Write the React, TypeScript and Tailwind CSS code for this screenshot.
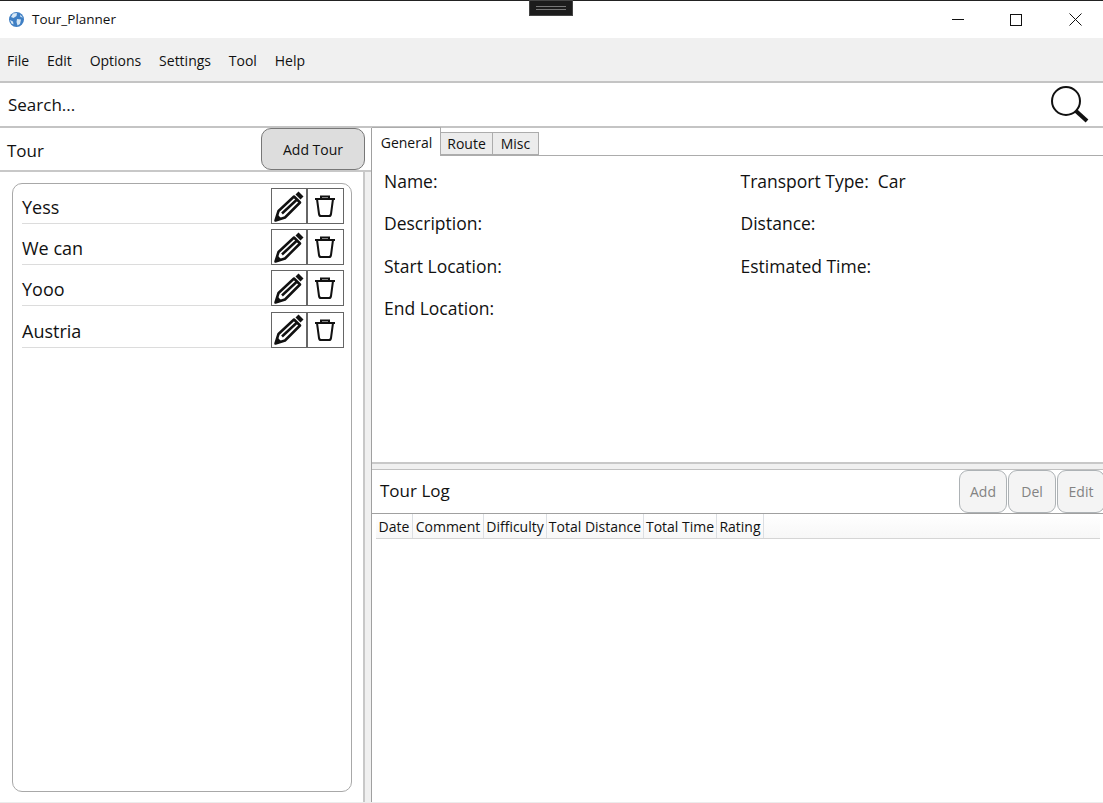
import React from "react";

const menuItems = ["File", "Edit", "Options", "Settings", "Tool", "Help"];
const tours = ["Yess", "We can", "Yooo", "Austria"];
const columns = [
  { label: "Date", width: "w-[37px]" },
  { label: "Comment", width: "w-[71px]" },
  { label: "Difficulty", width: "w-[63px]" },
  { label: "Total Distance", width: "w-[97px]" },
  { label: "Total Time", width: "w-[73px]" },
  { label: "Rating", width: "w-[47px]" },
];

function GlobeIcon() {
  return (
    <svg width="17" height="17" viewBox="0 0 17 17">
      <circle cx="8.5" cy="8.5" r="7.5" fill="#3f7fc4" />
      <path d="M5 2.5 L9 2 L8.5 5 L5.5 7 L3 6 Z M9 8 L13 8.5 L12 13 L9.5 14.5 L8.5 11 Z M12 3.5 L15 6.5 L12.5 6 Z M2 9 L5 10.5 L5.5 13.5 L3.5 12.5 Z" fill="#d8e8f5" />
    </svg>
  );
}

function PencilIcon() {
  return (
    <svg width="30" height="31" viewBox="0 0 30 31">
      <path d="M1.5 29.5 L4.5 20 L20 5.5 L26 11.5 L11 26.5 Z" fill="white" stroke="#111" strokeWidth="2.5" strokeLinejoin="round" />
      <path d="M8 22.5 L23 8.5" stroke="#111" strokeWidth="2.5" />
      <path d="M1 30 L3 23 L8 28 Z" fill="#111" />
      <path d="M21.5 3.5 L24.5 0.5 L29.5 5.5 L26.5 8.5 Z" fill="#111" />
    </svg>
  );
}

function TrashIcon() {
  return (
    <svg className="mr-[1px]" width="22" height="22" viewBox="0 0 22 22" fill="none" stroke="#111" strokeWidth="2">
      <path d="M1 4 H21" />
      <path d="M7 4 V1.5 H15 V4" />
      <path d="M3 4 L5 19 Q5.3 21 7 21 H15 Q16.7 21 17 19 L19 4" />
    </svg>
  );
}

function TourRow({ name }: { name: string }) {
  return (
    <div className="flex h-[41.2px] items-start">
      <div className="flex h-[36px] flex-1 items-center border-b border-[#dcdcdc] pt-[4px] text-[18px]">
        {name}
      </div>
      <div className="flex h-[36px] w-[36px] items-center justify-center border border-[#666]">
        <PencilIcon />
      </div>
      <div className="flex h-[36px] w-[37px] items-center justify-center border border-[#666]">
        <TrashIcon />
      </div>
    </div>
  );
}

export default function App() {
  return (
    <div className="flex h-[803px] w-[1103px] flex-col overflow-hidden bg-white font-['Open_Sans','Liberation_Sans',sans-serif] text-[#111]">
      {/* Title bar */}
      <div className="relative flex h-[38px] shrink-0 items-center border-t border-[#222] pl-[8px]">
        <GlobeIcon />
        <span className="ml-[7px] text-[13.5px]">Tour_Planner</span>
        <div className="absolute left-[529px] top-[-1px] flex h-[16px] w-[44px] flex-col items-center justify-center gap-[2px] border border-[#444] bg-[#1c1c1c]">
          <div className="h-[1px] w-[30px] bg-[#777]" />
          <div className="h-[1px] w-[30px] bg-[#777]" />
        </div>
        <div className="ml-auto flex items-center">
          <div className="flex w-[58px] justify-center">
            <div className="h-[1px] w-[12px] bg-[#111]" />
          </div>
          <div className="flex w-[58px] justify-center">
            <div className="h-[12px] w-[12px] border border-[#111]" />
          </div>
          <div className="flex w-[58px] justify-center">
            <svg className="ml-[2px]" width="13" height="13" viewBox="0 0 13 13" stroke="#111" strokeWidth="1">
              <path d="M0.5 0.5 L12.5 12.5 M12.5 0.5 L0.5 12.5" />
            </svg>
          </div>
        </div>
      </div>

      {/* Menu */}
      <div className="flex h-[45px] shrink-0 items-center gap-[17.8px] border-b-2 border-[#c4c4c4] bg-[#f0f0f0] pl-[7px] pt-[2px] text-[14px]">
        {menuItems.map((item) => (
          <span key={item}>{item}</span>
        ))}
      </div>

      {/* Search */}
      <div className="flex h-[45px] shrink-0 items-center justify-between border-b-2 border-[#c4c4c4] pl-[8px] pr-[13px] text-[17px]">
        <span>Search...</span>
        <svg width="40" height="40" viewBox="0 0 40 40" fill="none" stroke="#111">
          <circle cx="16" cy="16" r="14" strokeWidth="2" />
          <path d="M26 26 L37 36" strokeWidth="4" />
        </svg>
      </div>

      <div className="flex min-h-0 flex-1">
        {/* Left panel */}
        <div className="flex w-[372px] shrink-0 flex-col border-r border-[#a0a0a0]">
          <div className="flex h-[44px] shrink-0 items-start justify-between border-b-2 border-[#c8c8c8] pr-[6px]">
            <span className="pl-[7px] pt-[10px] text-[17px]">Tour</span>
            <button className="h-[42px] w-[104px] rounded-[10px] border border-[#777] bg-[#dddddd] text-[14px]">
              Add Tour
            </button>
          </div>
          <div className="flex min-h-0 flex-1">
            <div className="flex-1 pl-[12px] pr-[11px] pt-[11px]">
              <div className="h-[609px] rounded-[10px] border border-[#a8a8a8] pl-[9px] pr-[7px] pt-[4px]">
                {tours.map((tour) => (
                  <TourRow key={tour} name={tour} />
                ))}
              </div>
            </div>
            {/* Splitter */}
            <div className="w-[8px] shrink-0 border-l-2 border-[#c8c8c8] bg-[#f0f0f0]" />
          </div>
        </div>

        {/* Right panel */}
        <div className="flex min-w-0 flex-1 flex-col">
          <div className="flex h-[336px] shrink-0 flex-col border-b-2 border-[#c8c8c8]">
            <div className="flex h-[28px] shrink-0 items-end border-b border-[#acacac]">
              <div className="z-10 mb-[-1px] flex h-[29px] w-[69px] items-center justify-center border-r border-t border-[#acacac] bg-white pl-[1px] text-[14px]">
                General
              </div>
              <div className="flex h-[23px] w-[52px] items-center justify-center border-y border-r border-[#acacac] bg-[#ececec] text-[14px]">
                Route
              </div>
              <div className="flex h-[23px] w-[46px] items-center justify-center border-y border-r border-[#acacac] bg-[#ececec] text-[14px]">
                Misc
              </div>
            </div>
            <div className="grid grid-cols-[356.5px_1fr] pl-[12px] pt-[4px] text-[17.5px]">
              <div className="flex flex-col">
                <div className="h-[42.4px] leading-[42px]">Name:</div>
                <div className="h-[42.4px] leading-[42px]">Description:</div>
                <div className="h-[42.4px] leading-[42px]">Start Location:</div>
                <div className="h-[42.4px] leading-[42px]">End Location:</div>
              </div>
              <div className="flex flex-col">
                <div className="flex h-[42.4px] gap-[9px] leading-[42px]">
                  <span>Transport Type:</span>
                  <span>Car</span>
                </div>
                <div className="h-[42.4px] leading-[42px]">Distance:</div>
                <div className="h-[42.4px] leading-[42px]">Estimated Time:</div>
              </div>
            </div>
          </div>

          <div className="h-[5px] shrink-0 bg-[#f0f0f0]" />

          {/* Tour log */}
          <div className="flex h-[45px] shrink-0 items-center justify-between border-y border-t-[#c0c0c0] border-b-[#a0a0a0] pl-[8px]">
            <span className="pb-[2px] text-[17px]">Tour Log</span>
            <div className="mr-[-2px] flex gap-[1px] self-start">
              {["Add", "Del", "Edit"].map((label) => (
                <button
                  key={label}
                  className="h-[43px] w-[48px] rounded-[9px] border border-[#adb2b5] bg-[#f4f4f4] text-[14px] text-[#838383]"
                >
                  {label}
                </button>
              ))}
            </div>
          </div>
          <div className="ml-[4px] mr-[3px] flex h-[25px] shrink-0 border-b border-[#d5d5d5] bg-gradient-to-b from-white to-[#f7f7f7] text-[14px]">
            {columns.map((col) => (
              <div
                key={col.label}
                className={`${col.width} flex items-center justify-center whitespace-nowrap border-r border-[#dcdfe3]`}
              >
                {col.label}
              </div>
            ))}
          </div>
        </div>
      </div>
      <div className="h-[1px] shrink-0 bg-[#ececec]" />
    </div>
  );
}
